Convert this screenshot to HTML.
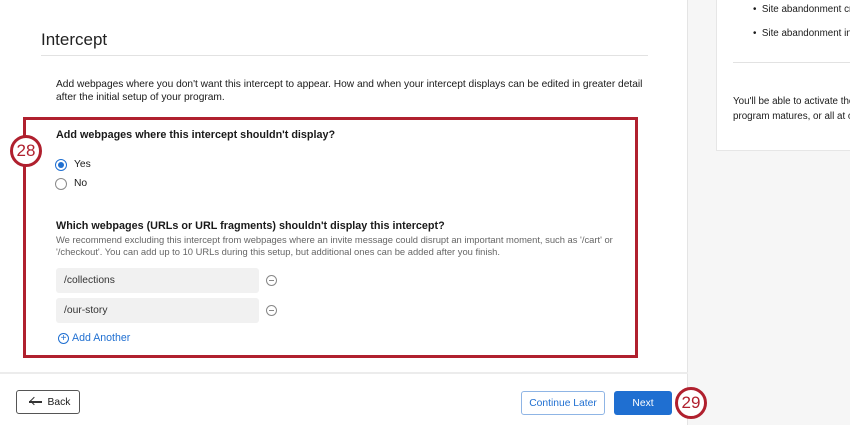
<!DOCTYPE html>
<html><head><style>
*{margin:0;padding:0;box-sizing:border-box}
body{width:850px;height:425px;overflow:hidden;background:#f6f6f6;font-family:"Liberation Sans",sans-serif;color:#1a1a1a;position:relative}
.left{position:absolute;left:0;top:0;width:688px;height:425px;background:#fff;border-right:1px solid #e4e4e4}
.a{position:absolute}
.card{position:absolute;left:716px;top:-2px;width:140px;height:153px;background:#fff;border:1px solid #e6e6e6}
.radio{position:absolute;width:12px;height:12px;border-radius:50%;border:1px solid #8a8a8a;background:#fff}
.inp{position:absolute;left:56px;width:203px;height:25px;background:#f1f1f1;border-radius:3px;font-size:10.3px;padding:7px 0 0 8px;color:#333}
.minus{position:absolute;left:266px;width:11px;height:11px;border:1px solid #888;border-radius:50%}
.minus:after{content:"";position:absolute;left:2px;top:4px;width:5px;height:1px;background:#888}
.badge{position:absolute;width:32px;height:32px;border-radius:50%;border:3px solid #b0202e;background:#fff;color:#b0202e;font-size:17px;text-align:center;line-height:26px}
.btn{position:absolute;display:flex;align-items:center;justify-content:center;font-size:10.3px;border-radius:3px}
</style></head><body>
<div class="left">
<div class="a" style="left:41px;top:30px;font-size:17px;color:#222">Intercept</div>
<div class="a" style="left:41px;top:55px;width:607px;height:1px;background:#e2e2e2"></div>
<div class="a" style="left:56px;top:79px;font-size:10.2px;line-height:12.5px;width:600px">Add webpages where you don't want this intercept to appear. How and when your intercept displays can be edited in greater detail after the initial setup of your program.</div>
<div class="a" style="left:23px;top:117px;width:615px;height:241px;border:3px solid #b0202e"></div>
<div class="a" style="left:56px;top:129px;font-size:10.8px;font-weight:bold">Add webpages where this intercept shouldn't display?</div>
<div class="radio" style="left:55px;top:159px;border-color:#1f6fd1"><div style="position:absolute;left:2px;top:2px;width:6px;height:6px;border-radius:50%;background:#1f6fd1"></div></div>
<div class="a" style="left:74px;top:159px;font-size:10.3px">Yes</div>
<div class="radio" style="left:55px;top:178px"></div>
<div class="a" style="left:74px;top:178px;font-size:10.3px">No</div>
<div class="a" style="left:56px;top:220px;font-size:10.8px;font-weight:bold">Which webpages (URLs or URL fragments) shouldn't display this intercept?</div>
<div class="a" style="left:56px;top:234px;font-size:9.4px;line-height:11.5px;color:#666;width:575px">We recommend excluding this intercept from webpages where an invite message could disrupt an important moment, such as '/cart' or '/checkout'. You can add up to 10 URLs during this setup, but additional ones can be added after you finish.</div>
<div class="inp" style="top:268px">/collections</div>
<div class="minus" style="left:266px;top:275px"></div>
<div class="inp" style="top:298px">/our-story</div>
<div class="minus" style="left:266px;top:305px"></div>
<div class="a" style="left:58px;top:333px;width:11px;height:11px;border:1px solid #1f6fd1;border-radius:50%;color:#1f6fd1;font-size:10px;line-height:9px;text-align:center">+</div>
<div class="a" style="left:72px;top:332px;font-size:10.6px;color:#1f6fd1">Add Another</div>
<div class="a" style="left:0;top:372px;width:688px;height:2px;background:#ececec"></div>
<div class="btn" style="left:16px;top:390px;width:64px;height:24px;border:1px solid #555;padding-left:22px">Back</div>
<div class="a" style="left:29px;top:401px;width:13px;height:1.5px;background:#333"></div>
<div class="a" style="left:31px;top:398px;width:6px;height:6px;border-left:1.5px solid #333;border-bottom:1.5px solid #333;transform:rotate(45deg)"></div>
<div class="btn" style="left:521px;top:391px;width:84px;height:24px;border:1px solid #8fb5e5;color:#1f6fd1">Continue Later</div>
<div class="btn" style="left:614px;top:391px;width:58px;height:24px;background:#1f6fd1;color:#fff">Next</div>
</div>
<div class="badge" style="left:10px;top:135px">28</div>
<div class="badge" style="left:675px;top:387px">29</div>
<div class="card">
<div class="a" style="left:36px;top:5px;font-size:9.8px;white-space:nowrap">•&nbsp;&nbsp;Site abandonment cre</div>
<div class="a" style="left:36px;top:29px;font-size:9.8px;white-space:nowrap">•&nbsp;&nbsp;Site abandonment int</div>
<div class="a" style="left:16px;top:63px;width:130px;height:1px;background:#e2e2e2"></div>
<div class="a" style="left:16px;top:95px;font-size:9.8px;line-height:15px;white-space:nowrap">You'll be able to activate the<br>program matures, or all at o</div>
</div>
</body></html>
